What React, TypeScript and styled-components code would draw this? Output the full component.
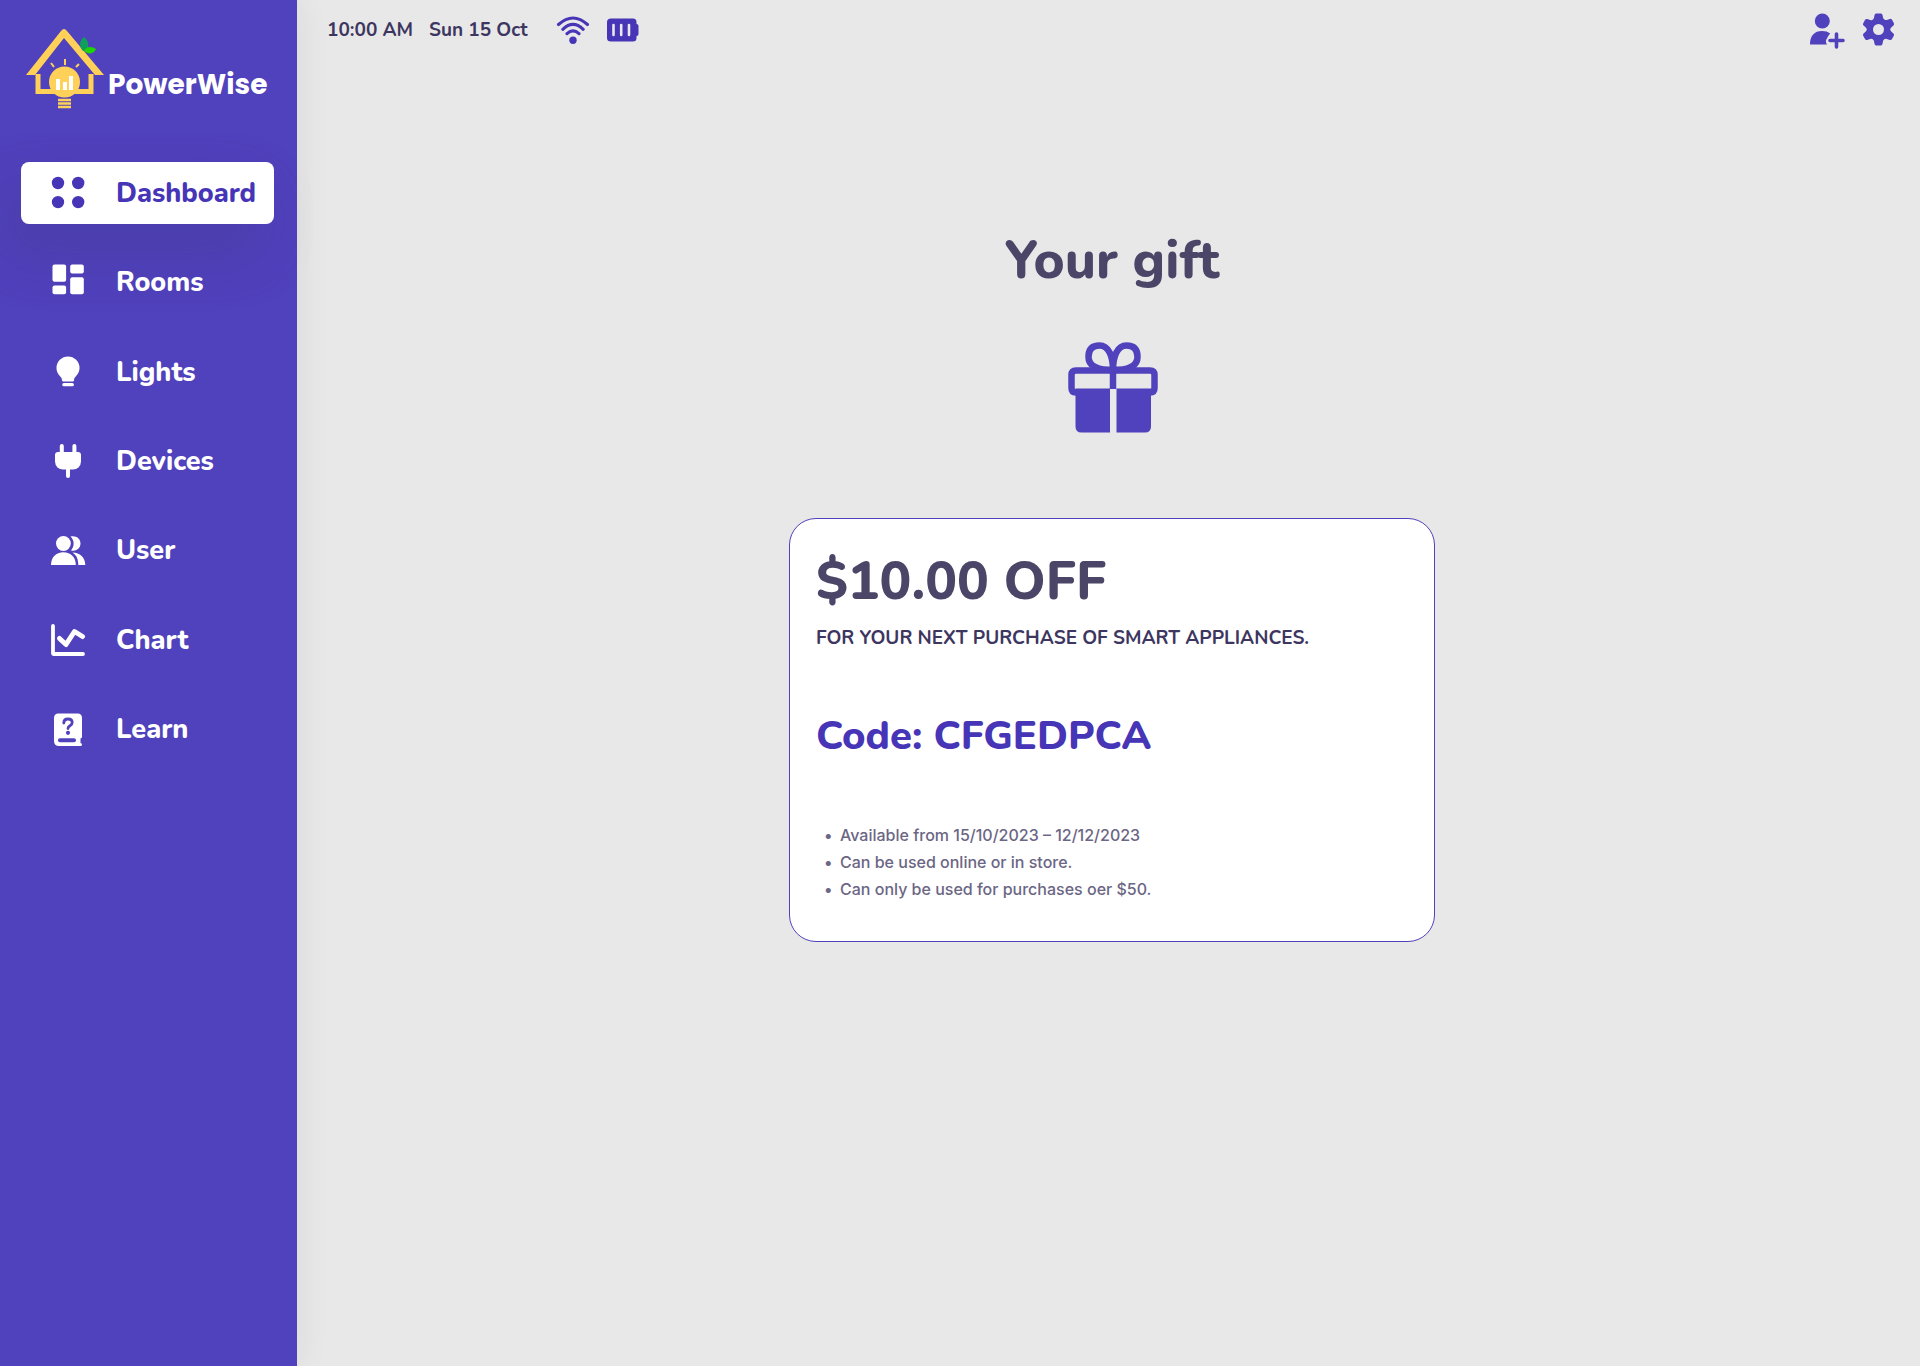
import React from "react";
import styled, { createGlobalStyle } from "styled-components";

const color = {
  brand: "#5041bc",
  brandDeep: "#4735b7",
  page: "#e8e8e8",
  heading: "#4b4568",
  ink: "#3d3660",
  muted: "#6b6684",
  yellow: "#ffd159",
};

const display = `Nunito, Lato, "Open Sans", sans-serif`;

const GlobalStyle = createGlobalStyle`
  *, *::before, *::after { box-sizing: border-box; }
  body { margin: 0; background: ${color.page}; font-family: ${display}; }
  h1, h2, p, ul { margin: 0; padding: 0; }
  svg { display: block; flex: none; }
`;

const Page = styled.div`
  display: flex;
  min-height: 100vh;
`;

const Sidebar = styled.aside`
  flex: none;
  width: 297px;
  padding: 28px 23px 28px 21px;
  background: ${color.brand};
  box-shadow: 0 0 32px rgba(40, 40, 70, 0.08);
`;

const Brand = styled.a`
  display: flex;
  align-items: center;
  gap: 3px;
  padding-left: 4px;
  margin-bottom: 52px;
  color: #fff;
  text-decoration: none;
`;

const BrandName = styled.span`
  padding-top: 32px;
  font: 700 28px/32px Poppins, Inter, sans-serif;
`;

const NavList = styled.ul`
  display: flex;
  flex-direction: column;
  gap: 2vh;
  list-style: none;
`;

const NavLink = styled.a<{ $active?: boolean }>`
  display: flex;
  align-items: center;
  gap: 28px;
  height: 62px;
  padding-left: 27px;
  border-radius: 8px;
  font: 800 27px/32px ${display};
  text-decoration: none;
  color: ${(p) => (p.$active ? color.brandDeep : "#fff")};
  background: ${(p) => (p.$active ? "#fff" : "transparent")};
  box-shadow: ${(p) => (p.$active ? "-16px 28px 56px rgba(60, 50, 110, 0.25)" : "none")};
`;

const NavLabel = styled.span`
  padding-top: 2px;
`;

const Main = styled.div`
  flex: 1;
  min-width: 0;
`;

const TopBar = styled.header`
  display: flex;
  align-items: center;
  justify-content: space-between;
  height: 60px;
  padding: 0 24px 0 30px;
  color: ${color.brandDeep};
`;

const Status = styled.div`
  display: flex;
  align-items: center;
  gap: 16px;
`;

const StatusText = styled.span`
  font: 700 19px/24px ${display};
  color: ${color.ink};
`;

const StatusIcons = styled.div`
  display: flex;
  align-items: center;
  gap: 16px;
  padding-left: 12px;
`;

const Actions = styled.div`
  display: flex;
  gap: 16px;
`;

const IconButton = styled.button`
  padding: 0;
  border: 0;
  background: none;
  color: ${color.brand};
  cursor: pointer;
`;

const Content = styled.main`
  display: flex;
  flex-direction: column;
  align-items: center;
  padding: 169px 0 64px 7px;
  color: ${color.brand};
`;

const Title = styled.h1`
  margin-bottom: 49px;
  font: 800 53px/64px ${display};
  color: ${color.heading};
`;

const Coupon = styled.section`
  width: 100%;
  max-width: 646px;
  margin-top: 85px;
  padding: 31px 26px 38px;
  border: 1px solid ${color.brand};
  border-radius: 27px;
  background: #fff;
`;

const Amount = styled.h2`
  font: 800 53px/64px ${display};
  color: ${color.heading};
`;

const Purpose = styled.p`
  margin-top: 12px;
  font: 700 19px/24px ${display};
  color: ${color.ink};
`;

const Code = styled.p`
  margin-top: 62px;
  font: 800 40px/48px ${display};
  color: ${color.brandDeep};
`;

const Terms = styled.ul`
  margin-top: 62px;
  padding-left: 8px;
  font: 500 16px/27px Inter, sans-serif;
  color: ${color.muted};
  list-style: none;
`;

const Term = styled.li`
  display: flex;

  &::before {
    content: "•";
    width: 16px;
  }
`;

const Logo = () => (
  <svg width="80" height="82" viewBox="25 28 80 82" fill="none" aria-hidden="true">
    <path d="M26 75 61 31q3-4 6 0l37 44h-9L64 38 35 75z" fill={color.yellow} />
    <path d="M38 74v17.500h53V74" stroke={color.yellow} strokeWidth="5" />
    <circle cx="64.500" cy="82" r="15.500" fill={color.yellow} />
    <path d="M65 59v6M51 63l3 4M79 64l-3 3" stroke={color.yellow} strokeWidth="2" />
    <path d="M58 79v11M65 82v8M71 76v14" stroke="#fff" strokeWidth="4" />
    <path d="M58 100h13M58 103.500h13M58 107h13" stroke={color.yellow} strokeWidth="2.500" />
    <path d="M83 51c-5-5-3-11 1-14 5 4 5 9 3 13z" fill="#0f9e5c" />
    <path d="M84 51c2-5 8-5 12-2-2 5-8 6-12 2z" fill="#1fd407" />
  </svg>
);

const NavIcon = ({ children }: { children: React.ReactNode }) => (
  <svg width="40" height="40" viewBox="0 0 40 40" fill="currentColor" aria-hidden="true">
    {children}
  </svg>
);

const navItems: { label: string; icon: React.ReactNode }[] = [
  {
    label: "Dashboard",
    icon: (
      <>
        <circle cx="10" cy="10" r="6.200" />
        <circle cx="30.200" cy="10" r="6.200" />
        <circle cx="10" cy="29.100" r="6.200" />
        <circle cx="30.200" cy="29.100" r="6.200" />
      </>
    ),
  },
  {
    label: "Rooms",
    icon: (
      <>
        <rect x="4.500" y="2.500" width="13.600" height="17.300" rx="2" />
        <rect x="4.500" y="23.500" width="13.600" height="8.700" rx="2" />
        <rect x="22.200" y="2.500" width="13.600" height="9" rx="2" />
        <rect x="22.200" y="15.200" width="13.600" height="17" rx="2" />
      </>
    ),
  },
  {
    label: "Lights",
    icon: (
      <>
        <path d="M20 4.500a11.500 11.500 0 0 1 11.500 11.500c0 4.500-2.400 7-4.600 9.500-.8 1-.8 2-.9 3-.2.700-.6 1-1.200 1h-9.600c-.6 0-1-.3-1.200-1-.1-1-.1-2-.9-3-2.200-2.500-4.600-5-4.600-9.500A11.500 11.500 0 0 1 20 4.500z" />
        <rect x="14.300" y="31" width="11.600" height="3.200" rx="1.500" />
      </>
    ),
  },
  {
    label: "Devices",
    icon: (
      <>
        <path d="M11.800 13V5a2 2 0 0 1 4 0v8zM24.400 13V5a2 2 0 0 1 4 0v8z" />
        <path d="M10 11h20a3 3 0 0 1 3 3v6.500a8 8 0 0 1-8 8H15a8 8 0 0 1-8-8V14a3 3 0 0 1 3-3z" />
        <path d="M18 27h4v8a2 2 0 0 1-4 0z" />
      </>
    ),
  },
  {
    label: "User",
    icon: (
      <>
        <circle cx="15.400" cy="13.500" r="7.400" />
        <path d="M3 35c0-8 5-12.800 12.400-12.800S27.800 27 27.800 35z" />
        <path d="M22.500 6.600C27.600 5.300 32.500 8.300 32.500 13.500s-4.900 8.200-9.500 6.900c3.600-4 3.600-9.800-.5-13.800z" />
        <path d="M24.500 22.500c7.500 0 12.800 5 12.800 12.500h-7c0-5.500-1.500-9.500-5.800-12.500z" />
      </>
    ),
  },
  {
    label: "Chart",
    icon: (
      <g fill="none" stroke="currentColor" strokeLinecap="round" strokeLinejoin="round">
        <path d="M5 6v27.500q0 .5.500.5H35" strokeWidth="3.800" />
        <path d="m11.500 18.500 6.500 6 8.500-13 8 5" strokeWidth="5" />
      </g>
    ),
  },
  {
    label: "Learn",
    icon: (
      <>
        <path d="M10.500 4.500h19q4.500 0 4.500 4.500v19.500l-1.500 1v4.500q1.500 0 1.500 1.500 0 1.500-1.500 1.500H11q-5 0-5-5V9q0-4.500 4.500-4.500z" />
        <rect x="10" y="29.300" width="18" height="4" rx="2" fill={color.brand} />
        <path d="M15.800 14q0-4 4.200-4t4.200 3.600q0 2-2.200 3.200-2 1.200-2 2.700" fill="none" stroke={color.brand} strokeWidth="2.800" strokeLinecap="round" />
        <circle cx="20" cy="23.800" r="2.100" fill={color.brand} />
      </>
    ),
  },
];

const WifiIcon = () => (
  <svg width="34" height="30" viewBox="0 0 34 30" fill="none" stroke="currentColor" strokeWidth="3.100" strokeLinecap="round" role="img" aria-label="Wi-Fi">
    <path d="M2.500 9.500q14.500-13 29 0M6.800 14.300q10.200-9.800 20.400 0M11 18.700q6-5.600 12 0" />
    <circle cx="17" cy="25.200" r="3.700" fill="currentColor" stroke="none" />
  </svg>
);

const BatteryIcon = () => (
  <svg width="34" height="26" viewBox="0 0 34 26" fill="currentColor" role="img" aria-label="Battery full">
    <path d="M5 1.500h22q3.500 0 3.500 3.500v2q2 0 2 2v8q0 2-2 2v2q0 3.500-3.500 3.500H5q-4 0-4-3.500V5q0-3.500 4-3.500z" />
    <path d="M7.500 8v10M15.200 8v10M23 8v10" stroke={color.page} strokeWidth="2.600" strokeLinecap="round" />
  </svg>
);

const AddUserIcon = () => (
  <svg width="36" height="38" viewBox="0 0 36 38" fill="currentColor" aria-hidden="true">
    <circle cx="12.300" cy="10" r="7.500" />
    <path d="M0 33.500c0-9 4.500-13.500 12-13.500 3.500 0 6 .8 8.200 2.600-1.600 2-2.200 3-3.200 4.900-1.500 1.500-1.500 4 0 6z" />
    <path d="M26.500 23v13M20 29.500h13" stroke="currentColor" strokeWidth="3.600" strokeLinecap="round" />
  </svg>
);

const GearIcon = () => (
  <svg width="34" height="38" viewBox="-16.500 -18.500 34 38" aria-hidden="true">
    <path
      d="M-2.500-16h5q1.200 0 1.500 1.500l.6 3q.5 1 1.700 1.700 1 .6 2 .2l3-1q1.400-.4 2.100.7l2 3.600q.6 1.200-.5 2.200L12.500-1.800q-.7.800-.7 1.800t.7 1.800l2.400 2.100q1.100 1 .5 2.200l-2 3.600q-.7 1.100-2.100.7l-3-1q-1-.4-2 .2-1.200.7-1.700 1.700l-.6 3Q3.700 16 2.500 16h-5q-1.200 0-1.500-1.700l-.6-3q-.5-1-1.700-1.700-1-.6-2-.2l-3 1q-1.400.4-2.100-.7l-2-3.600q-.6-1.200.5-2.200l2.400-2.100q.7-.8.700-1.800t-.7-1.800l-2.400-2.100q-1.100-1-.5-2.200l2-3.600q.7-1.100 2.100-.7l3 1q1 .4 2-.2 1.200-.7 1.700-1.700l.6-3q.3-1.700 1.500-1.700z"
      fill="currentColor"
    />
    <circle r="5.500" fill={color.page} />
  </svg>
);

const GiftIcon = () => (
  <svg width="91" height="91" viewBox="-1 0 91 91" fill="none" role="img" aria-label="Gift">
    <path d="M7.500 46.500H42v44H13.500q-6 0-6-6zM48.500 46.500H83v38q0 6-6 6H48.500z" fill="currentColor" />
    <path d="M8 50.500q-4.500 0-4.500-4.500V33q0-4.500 4.500-4.500h74q4.500 0 4.500 4.500v13q0 4.500-4.500 4.500" stroke="currentColor" strokeWidth="6.500" />
    <path d="M45 28v19" stroke="currentColor" strokeWidth="6.500" />
    <path d="M45 28C45 14 40.500 3.500 31.500 3.500q-11 0-11 11.500C20.500 24 30 28 45 28zM45 28C45 14 49.500 3.500 58.500 3.500q11 0 11 11.500C69.500 24 60 28 45 28z" stroke="currentColor" strokeWidth="6.500" />
  </svg>
);

export default function App() {
  return (
    <Page>
      <GlobalStyle />
      <Sidebar>
        <Brand href="#">
          <Logo />
          <BrandName>PowerWise</BrandName>
        </Brand>
        <nav aria-label="Primary">
          <NavList>
            {navItems.map(({ label, icon }, i) => (
              <li key={label}>
                <NavLink href={`#${label.toLowerCase()}`} $active={i === 0} aria-current={i === 0 ? "page" : undefined}>
                  <NavIcon>{icon}</NavIcon>
                  <NavLabel>{label}</NavLabel>
                </NavLink>
              </li>
            ))}
          </NavList>
        </nav>
      </Sidebar>
      <Main>
        <TopBar>
          <Status>
            <StatusText>10:00 AM</StatusText>
            <StatusText>Sun 15 Oct</StatusText>
            <StatusIcons>
              <WifiIcon />
              <BatteryIcon />
            </StatusIcons>
          </Status>
          <Actions>
            <IconButton type="button" aria-label="Add user">
              <AddUserIcon />
            </IconButton>
            <IconButton type="button" aria-label="Settings">
              <GearIcon />
            </IconButton>
          </Actions>
        </TopBar>
        <Content>
          <Title>Your gift</Title>
          <GiftIcon />
          <Coupon>
            <Amount>$10.00 OFF</Amount>
            <Purpose>FOR YOUR NEXT PURCHASE OF SMART APPLIANCES.</Purpose>
            <Code>Code: CFGEDPCA</Code>
            <Terms>
              <Term>Available from 15/10/2023 – 12/12/2023</Term>
              <Term>Can be used online or in store.</Term>
              <Term>Can only be used for purchases oer $50.</Term>
            </Terms>
          </Coupon>
        </Content>
      </Main>
    </Page>
  );
}
